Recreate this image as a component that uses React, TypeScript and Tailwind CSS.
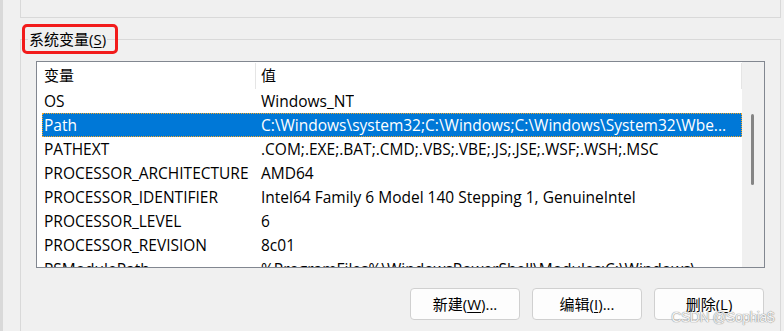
import React from "react";

// 系统变量 rows
const ROWS = [
  { name: "OS", value: "Windows_NT" },
  {
    name: "Path",
    value: "C:\\Windows\\system32;C:\\Windows;C:\\Windows\\System32\\Wbe...",
    selected: true,
  },
  { name: "PATHEXT", value: ".COM;.EXE;.BAT;.CMD;.VBS;.VBE;.JS;.JSE;.WSF;.WSH;.MSC" },
  { name: "PROCESSOR_ARCHITECTURE", value: "AMD64" },
  { name: "PROCESSOR_IDENTIFIER", value: "Intel64 Family 6 Model 140 Stepping 1, GenuineIntel" },
  { name: "PROCESSOR_LEVEL", value: "6" },
  { name: "PROCESSOR_REVISION", value: "8c01" },
  {
    name: "PSModulePath",
    value: "%ProgramFiles%\\WindowsPowerShell\\Modules;C:\\Windows\\...",
  },
];

const FONT = "font-['Open_Sans','Noto_Sans_CJK_SC',sans-serif]";

function WinButton({ label, hotkey, suffix }: { label: string; hotkey: string; suffix: string }) {
  return (
    <button className="w-[110px] h-[32px] rounded-[4px] border border-[#d0d0d0] bg-[#fdfdfd] text-[15px] text-black flex items-center justify-center">
      <span>
        {label}(<span className="underline underline-offset-2">{hotkey}</span>){suffix}
      </span>
    </button>
  );
}

export default function App() {
  return (
    <div className={`relative w-[784px] h-[331px] bg-[#f0f0f0] overflow-hidden flex ${FONT}`}>
      {/* window behind, left edge */}
      <div className="w-[3px] shrink-0 bg-[#d9d9d9]" />

      <div className="flex-1 flex flex-col pl-[17px] pr-[3px]">
        {/* 用户变量 group (bottom edge only) */}
        <div className="h-[18px] border-x border-b border-[#d9d9d9]" />

        {/* 系统变量 group */}
        <div className="relative mt-[21px] flex-1 flex flex-col border-x border-t border-[#d9d9d9] pl-[15px] pr-[15px] pt-[21px]">
          <span className="absolute left-[7px] top-[-11px] px-[1px] bg-[#f0f0f0] text-[15px] leading-[20px] text-black">
            系统变量(<span className="underline underline-offset-2">S</span>)
          </span>
          {/* red highlight */}
          <div className="absolute left-[1px] top-[-16px] w-[96px] h-[30px] rounded-[5px] border-[3px] border-[#f21b1b]" />

          {/* list view */}
          <div className="h-[207px] border border-[#828790] bg-white flex overflow-hidden">
            <div className="w-[705px] flex flex-col text-[15.5px] text-black">
              {/* header */}
              <div className="h-[27px] shrink-0 flex text-[15px]">
                <div className="w-[218px] pl-[7px] flex items-center">变量</div>
                <div className="w-px mt-[1px] h-[26px] bg-[#e5e5e5]" />
                <div className="flex-1 pl-[5px] flex items-center">值</div>
                <div className="w-px mt-[1px] h-[26px] bg-[#e5e5e5]" />
              </div>
              {ROWS.map((r) => (
                <div
                  key={r.name}
                  className={`ml-[5px] h-[24px] shrink-0 flex items-center whitespace-nowrap overflow-hidden leading-[22px] ${
                    r.selected
                      ? "bg-[#0078d7] text-white border border-dotted border-[#f5a524]"
                      : ""
                  }`}
                >
                  <div className={`w-[213px] shrink-0 ${r.selected ? "pl-[1px]" : "pl-[2px]"}`}>{r.name}</div>
                  <div className={`${r.selected ? "pl-[5px]" : "pl-[6px]"} overflow-hidden`}>{r.value}</div>
                </div>
              ))}
            </div>
            {/* scrollbar */}
            <div className="flex-1 bg-[#f0f0f0] pl-[9px]">
              <div className="mt-[52px] w-[3px] h-[71px] rounded-full bg-[#858585]" />
            </div>
          </div>

          {/* buttons */}
          <div className="mt-[20px] flex justify-end gap-[12px] pr-[1px]">
            <WinButton label="新建" hotkey="W" suffix="..." />
            <WinButton label="编辑" hotkey="I" suffix="..." />
            <WinButton label="删除" hotkey="L" suffix="" />
          </div>
        </div>
      </div>

      {/* watermark */}
      <span className="absolute right-[10px] bottom-[7px] text-[14px] tracking-[-0.5px] leading-none text-[#f4f4f4] [text-shadow:0_0_1px_#8a8a8a,0_0_1px_#8a8a8a] font-['Liberation_Sans',sans-serif]">
        CSDN @Sophia$
      </span>
    </div>
  );
}
